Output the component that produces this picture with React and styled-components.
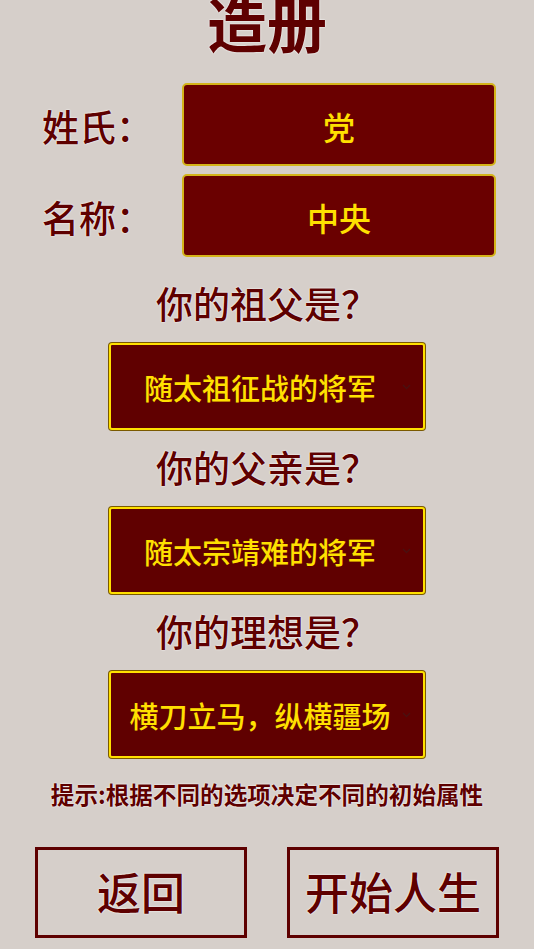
import React from "react";
import styled, { createGlobalStyle } from "styled-components";

const GlobalStyle = createGlobalStyle`
  body {
    margin: 0;
    background: #d6cfca;
    font-family: "Noto Sans CJK SC", "Noto Sans", sans-serif;
  }
`;

const glow = "0 0 2px #fff, 0 0 1px #fff";
const medium = `"Noto Sans CJK SC Medium", "Noto Sans CJK SC", sans-serif`;

const Page = styled.div`
  width: 534px;
  height: 949px;
  overflow: hidden;
  display: flex;
  flex-direction: column;
  align-items: center;
`;

const Title = styled.h1`
  margin: -8px 0 0;
  font-size: 60px;
  line-height: 1;
  font-weight: 700;
  color: #5e0000;
  text-shadow: ${glow};
`;

const Form = styled.div`
  width: 100%;
  margin-top: 31px;
  display: flex;
  flex-direction: column;
  gap: 8px;
`;

const Row = styled.div`
  display: flex;
  align-items: center;
  padding-left: 42px;
`;

const Label = styled.div`
  width: 140px;
  padding-top: 4px;
  font-family: ${medium};
  font-weight: 500;
  font-size: 37px;
  line-height: 1;
  color: #5e0000;
  text-shadow: ${glow};
`;

const NameInput = styled.div`
  box-sizing: border-box;
  width: 314px;
  height: 83px;
  background: #6a0000;
  border: 2px solid #d4b41a;
  border-radius: 5px;
  display: flex;
  align-items: center;
  justify-content: center;
  padding-top: 2px;
  font-family: ${medium};
  font-weight: 500;
  font-size: 32px;
  color: #ffe000;
`;

const Question = styled.div`
  margin: ${(p) => (p.first ? "24px" : "15px")} 0 18px;
  font-family: ${medium};
  font-weight: 500;
  font-size: 37px;
  line-height: 44px;
  color: #5e0000;
  text-shadow: ${glow};
`;

const SelectBox = styled.div`
  position: relative;
  box-sizing: border-box;
  width: 316px;
  height: 87px;
  background: #600000;
  border: 2px solid #ffe000;
  box-shadow: 0 0 0 1px #7a5a00;
  border-radius: 3px;
  display: flex;
  align-items: center;
  padding-right: 14px;
`;

const SelectText = styled.div`
  flex: 1;
  text-align: center;
  font-family: ${medium};
  font-size: 29px;
  font-weight: 500;
  color: #ffe000;
  white-space: nowrap;
`;

const Chevron = styled.svg`
  position: absolute;
  right: 12px;
  top: 50%;
  margin-top: -3px;
`;

const Hint = styled.div`
  margin-top: 22px;
  font-size: 23.6px;
  line-height: 28px;
  font-weight: 700;
  color: #5e0000;
  text-shadow: ${glow};
`;

const Buttons = styled.div`
  margin-top: 39px;
  width: 100%;
  box-sizing: border-box;
  padding: 0 35px;
  display: flex;
  justify-content: space-between;
`;

const Button = styled.button`
  box-sizing: border-box;
  width: 212px;
  height: 91px;
  background: transparent;
  border: 3px solid #5e0000;
  font-family: ${medium};
  font-weight: 500;
  font-size: 44px;
  line-height: 1;
  color: #5e0000;
  text-shadow: ${glow};
  padding: 0 0 4px;
`;

const Select = ({ value }) => (
  <SelectBox>
    <SelectText>{value}</SelectText>
    <Chevron width="9" height="6" viewBox="0 0 9 6">
      <path d="M1 1l3.5 3.5L8 1" fill="none" stroke="#4a1010" strokeWidth="1.3" />
    </Chevron>
  </SelectBox>
);

export default function App() {
  return (
    <Page>
      <GlobalStyle />
      <Title>造册</Title>
      <Form>
        <Row>
          <Label>姓氏：</Label>
          <NameInput>党</NameInput>
        </Row>
        <Row>
          <Label>名称：</Label>
          <NameInput>中央</NameInput>
        </Row>
      </Form>
      <Question first>你的祖父是？</Question>
      <Select value="随太祖征战的将军" />
      <Question>你的父亲是？</Question>
      <Select value="随太宗靖难的将军" />
      <Question>你的理想是？</Question>
      <Select value="横刀立马，纵横疆场" />
      <Hint>提示:根据不同的选项决定不同的初始属性</Hint>
      <Buttons>
        <Button>返回</Button>
        <Button>开始人生</Button>
      </Buttons>
    </Page>
  );
}
